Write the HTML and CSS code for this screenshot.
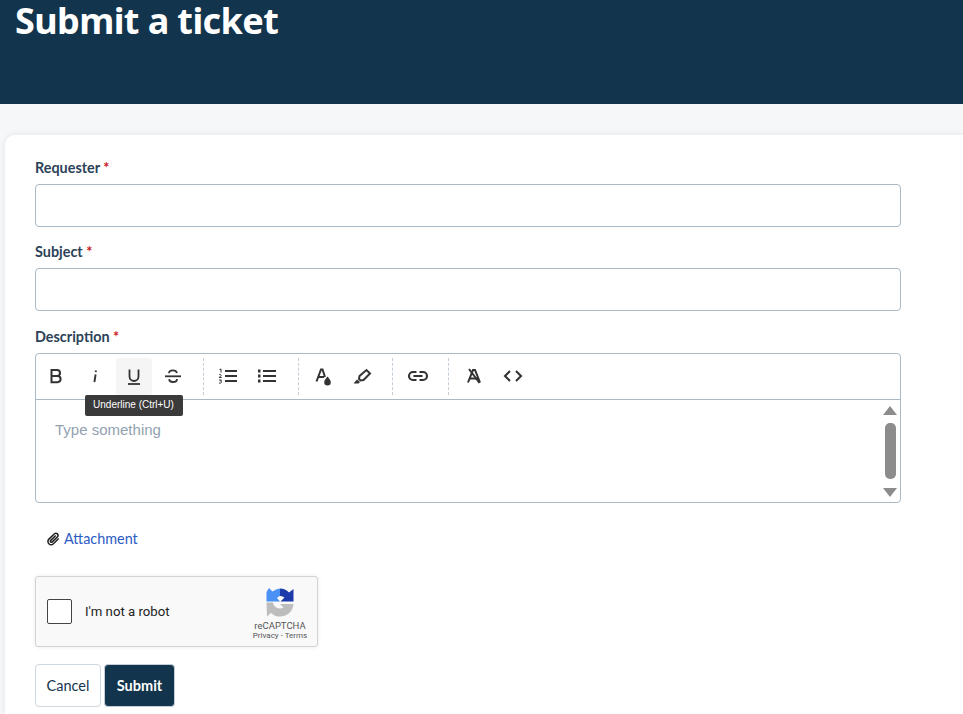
FILE: index.html
```html
<!DOCTYPE html>
<html lang="en">
<head>
    <meta charset="UTF-8">
    <meta name="viewport" content="width=device-width, initial-scale=1.0">
    <title>Submit a ticket</title>
    <link rel="stylesheet" href="styles.css">
</head>
<body>
    <div class="banner">
        <h1>Submit a ticket</h1>
    </div>

    <div class="card">
        <form class="ticket-form">
            <div class="form-group">
                <label for="requester">Requester <span class="req">*</span></label>
                <input type="text" id="requester">
            </div>

            <div class="form-group">
                <label for="subject">Subject <span class="req">*</span></label>
                <input type="text" id="subject">
            </div>

            <div class="form-group">
                <label>Description <span class="req">*</span></label>
                <div class="editor">
                    <div class="toolbar">
                        <div class="tool-group">
                            <span class="tool"><svg width="24" height="24" viewBox="0 0 24 24" fill="none" stroke="#333" stroke-width="2"><path d="M7.500 6h5.500a3 3 0 0 1 0 6H7.500zM7.500 12h6a3.100 3.100 0 0 1 0 6.200h-6z"/></svg></span>
                            <span class="tool"><svg width="24" height="24" viewBox="0 0 24 24" fill="none" stroke="#333" stroke-width="1.900"><path d="M12.600 10.500 11.400 18"/><path d="M12.900 6.500 12.700 8.200"/></svg></span>
                            <span class="tool tool-active">
                                <svg width="24" height="24" viewBox="0 0 24 24" fill="none" stroke="#333" stroke-width="1.800"><path d="M7.500 5.500v7a4.500 4.500 0 0 0 9 0v-7"/><path d="M6 20h12"/></svg>
                                <span class="tooltip">Underline (Ctrl+U)</span>
                            </span>
                            <span class="tool"><svg width="24" height="24" viewBox="0 0 24 24" fill="none" stroke="#333" stroke-width="1.800"><path d="M16 9c-.5-1.800-2-2.700-4-2.700-2.300 0-4 1.100-4 2.900"/><path d="M4 12.300h16"/><path d="M8 15.200c.4 1.800 2 2.800 4 2.800 2.300 0 4-1.200 4-3"/></svg></span>
                        </div>
                        <div class="tool-group">
                            <span class="tool"><svg width="24" height="24" viewBox="0 0 24 24" fill="none" stroke="#333" stroke-width="2"><path d="M9 7h12M9 12h12M9 17h12"/><path d="M3.500 5.500 5 5v3.500M3 10.800c1-.8 2.500-.3 2 .8L3.200 13.500h2.500M3 16h2.500l-1 1.100c1.400 0 1.400 2-.1 2H3" stroke-width="1"/></svg></span>
                            <span class="tool"><svg width="24" height="24" viewBox="0 0 24 24" fill="none" stroke="#333" stroke-width="2"><path d="M8 7h13M8 12h13M8 17h13"/><path d="M3 7h2.500M3 12h2.500M3 17h2.500" stroke-width="2.800"/></svg></span>
                        </div>
                        <div class="tool-group">
                            <span class="tool"><svg width="24" height="24" viewBox="0 0 24 24" fill="none" stroke="#333" stroke-width="2"><path d="M5.500 17.500 10 5.500h1.500L14 13M7 13h6"/><path d="M16.500 12.500c1.700 2.300 3.300 3.800 3.300 5.700a3.300 3.300 0 0 1-6.600 0c0-1.900 1.600-3.400 3.300-5.700z" fill="#333" stroke="none"/></svg></span>
                            <span class="tool"><svg width="24" height="24" viewBox="0 0 24 24" fill="none" stroke="#333" stroke-width="2"><path d="M9.500 12 16.500 6l3.500 3.500-6.500 6.500-3 .5-1.500-1.500z"/><path d="M3.500 19.500 7 15.500l3 2.500-1.500 1.500z" fill="#333" stroke="none"/></svg></span>
                        </div>
                        <div class="tool-group">
                            <span class="tool"><svg width="24" height="24" viewBox="0 0 24 24" fill="none" stroke="#333" stroke-width="2.100"><path d="M10.500 8H7a4 4 0 0 0 0 8h3.500M13.500 8H17a4 4 0 0 1 0 8h-3.500M7.500 12h9"/></svg></span>
                        </div>
                        <div class="tool-group tool-group-last">
                            <span class="tool"><svg width="24" height="24" viewBox="0 0 24 24" fill="none" stroke="#333" stroke-width="2"><path d="M6 18.500 11 6h2l5 12.500M8 14.500h8"/><path d="M7 5l10.500 14"/></svg></span>
                            <span class="tool"><svg width="24" height="24" viewBox="0 0 24 24" fill="none" stroke="#333" stroke-width="2.100"><path d="M9 7l-5 5 5 5M15 7l5 5-5 5"/></svg></span>
                        </div>
                    </div>
                    <div class="editor-body">
                        <div class="placeholder">Type something</div>
                        <div class="scrollbar">
                            <span class="arrow-up"></span>
                            <span class="thumb"></span>
                            <span class="arrow-down"></span>
                        </div>
                    </div>
                </div>
            </div>

            <a class="attach" href="#"><svg width="14" height="14" viewBox="0 0 24 24" fill="none" stroke="#222" stroke-width="2.600"><path d="M20 11 11 20a5.500 5.500 0 0 1-7.800-7.800L12.800 3a3.700 3.700 0 0 1 5.200 5.200L9 17a1.800 1.800 0 0 1-2.600-2.600L15 6"/></svg>Attachment</a>

            <div class="captcha">
                <span class="captcha-box"></span>
                <span class="captcha-text">I'm not a robot</span>
                <div class="captcha-brand">
                    <svg width="30" height="30" viewBox="0 0 30 30" fill="none">
                        <path d="M4 1 7.500 4.500A13.500 13.500 0 0 1 15 1.500V9a6.500 6.500 0 0 0-3 2L15 14.500H1.500V5z" fill="#4a90f5"/>
                        <path d="M15 1.500a13.500 13.500 0 0 1 9 4L28.500 2v12.500H15.500L19.500 10.500A6.500 6.500 0 0 0 15 9z" fill="#1c3aa9"/>
                        <path d="M1.500 15.500H8a7 7 0 0 0 10.500 5L15 17H28.500a13.500 13.500 0 0 1-22.500 9L2 29.500z" fill="#bdbdbd"/>
                    </svg>
                    <span class="captcha-name">reCAPTCHA</span>
                    <span class="captcha-links">Privacy - Terms</span>
                </div>
            </div>

            <div class="button-group">
                <button type="button" class="btn btn-secondary">Cancel</button>
                <button type="submit" class="btn btn-primary">Submit</button>
            </div>
        </form>
    </div>
</body>
</html>
```

FILE: styles.css
```css
* {
    margin: 0;
    padding: 0;
    box-sizing: border-box;
}

html, body {
    height: 100%;
    overflow: hidden;
}

body {
    font-family: "Lato", "Noto Sans", sans-serif;
    background-color: #f5f7f9;
    color: #12344d;
}

.banner {
    background: #12344d;
    height: 104px;
    padding-left: 15px;
}

.banner h1 {
    font-family: "Noto Sans", sans-serif;
    font-size: 36px;
    line-height: 42px;
    font-weight: 700;
    color: white;
    letter-spacing: -0.6px;
}

.card {
    background: white;
    margin: 31px -20px 0 5px;
    padding: 24px 30px 0;
    border-radius: 10px 0 0 0;
    box-shadow: 0 0 6px rgba(18,52,77,0.08);
    height: 579px;
}

.ticket-form {
    width: 866px;
}

.form-group {
    margin-bottom: 16.4px;
}

label {
    display: block;
    height: 25px;
    font-size: 14.4px;
    line-height: 18px;
    font-weight: 700;
    color: #2c4258;
}

.req {
    color: #c82124;
}

input[type="text"] {
    display: block;
    width: 100%;
    height: 43px;
    border: 1px solid #a9b9c6;
    border-radius: 4px;
    background: white;
}

.editor {
    border: 1px solid #a9b9c6;
    border-radius: 4px;
    height: 150px;
}

.toolbar {
    display: flex;
    height: 46px;
    padding-top: 4px;
    border-bottom: 1px solid #a9b9c6;
}

.tool-group {
    display: flex;
    height: 37px;
    padding-right: 10.75px;
    border-right: 1px dashed #c5ced6;
}

.tool-group + .tool-group {
    padding-left: 5px;
}

.tool-group-last {
    border-right: none;
}

.tool {
    position: relative;
    width: 36px;
    height: 37px;
    margin: 0 1.5px;
    display: flex;
    align-items: center;
    justify-content: center;
    border-radius: 3px;
}

.tool-active {
    background: #f5f5f5;
}

.tooltip {
    position: absolute;
    top: 37px;
    left: -31px;
    width: 98px;
    height: 21px;
    background: #3a3a3a;
    color: white;
    font-family: "Liberation Sans", sans-serif;
    font-size: 10px;
    line-height: 19px;
    text-align: center;
    border-radius: 2px;
    white-space: nowrap;
}

.editor-body {
    position: relative;
    height: 102px;
    padding: 20px 19px;
}

.placeholder {
    font-family: "Liberation Sans", sans-serif;
    font-size: 15px;
    line-height: 20px;
    color: #92a2b1;
}

.scrollbar {
    position: absolute;
    top: 0;
    right: 0;
    bottom: 0;
    width: 20px;
    display: flex;
    flex-direction: column;
    align-items: center;
    padding-top: 6px;
}

.arrow-up {
    border-left: 7px solid transparent;
    border-right: 7px solid transparent;
    border-bottom: 9px solid #8c8c8c;
}

.thumb {
    width: 11px;
    height: 56px;
    margin: 8px 0 9px;
    background: #8c8c8c;
    border-radius: 5px;
}

.arrow-down {
    border-left: 7px solid transparent;
    border-right: 7px solid transparent;
    border-top: 9px solid #8c8c8c;
}

.attach {
    display: flex;
    align-items: center;
    gap: 3px;
    margin: 27px 0 0 12px;
    height: 18px;
    font-size: 14.4px;
    color: #2c5cc5;
    text-decoration: none;
}

.captcha {
    display: flex;
    align-items: center;
    width: 283px;
    height: 71px;
    margin-top: 28px;
    padding-left: 11px;
    background: #f9f9f9;
    border: 1px solid #d3d3d3;
    border-radius: 3px;
    box-shadow: 0 0 4px rgba(0,0,0,0.08);
    font-family: "Roboto", sans-serif;
}

.captcha-box {
    width: 25px;
    height: 25px;
    background: white;
    border: 1px solid #444;
    border-radius: 2px;
}

.captcha-text {
    margin-left: 13px;
    font-size: 13.2px;
    color: #222;
}

.captcha-brand {
    align-self: flex-start;
    margin: 10px 5px 0 auto;
    width: 64px;
    display: flex;
    flex-direction: column;
    align-items: center;
}

.captcha-name {
    font-size: 9.5px;
    line-height: 11px;
    color: #555;
    margin-top: 3px;
}

.captcha-links {
    font-size: 8px;
    line-height: 10px;
    color: #555;
}

.button-group {
    display: flex;
    gap: 3px;
    margin-top: 17px;
}

.btn {
    height: 43px;
    border-radius: 4px;
    font-family: inherit;
    font-size: 14.5px;
    cursor: pointer;
}

.btn-primary {
    width: 71px;
    background: #12344d;
    color: white;
    border: 1px solid #c5ced6;
    font-weight: 700;
}

.btn-secondary {
    width: 66px;
    background: white;
    color: #12344d;
    border: 1px solid #cfd7df;
}
```
